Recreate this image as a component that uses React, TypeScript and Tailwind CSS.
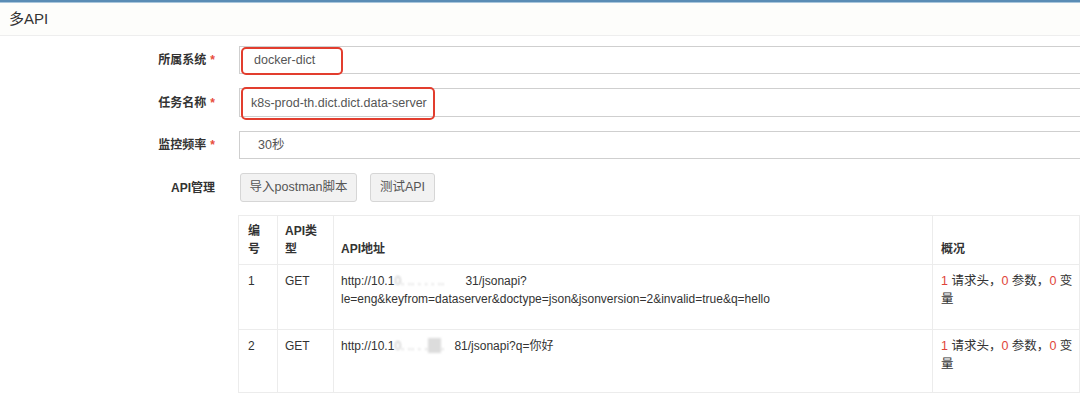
// 多API 表单页
const font = "font-['Liberation_Sans','Noto_Sans_CJK_SC',sans-serif]";

function Label({ text, required }: { text: string; required?: boolean }) {
  return (
    <div className="w-[215px] shrink-0 text-right text-[12px] font-bold text-[#333]">
      {text}
      {required && <span className="ml-[4px] text-[#e74c3c]">*</span>}
    </div>
  );
}

function Blur({ w, block }: { w: number; block?: boolean }) {
  return (
    <span
      className="relative inline-block overflow-hidden whitespace-nowrap align-top text-[#bdbdbd] blur-[1px]"
      style={{ width: w }}
    >
      0.&nbsp;..&nbsp;.&nbsp;.&nbsp;.&nbsp;..
      {block && <span className="absolute left-[34px] top-[1px] h-[15px] w-[13px] bg-[#dcdcdc]" />}
    </span>
  );
}

function Summary() {
  return (
    <>
      <span className="text-[#e0443a]">1</span> 请求头，<span className="text-[#e0443a]">0</span> 参数，
      <span className="text-[#e0443a]">0</span> 变<br />量
    </>
  );
}

export default function App() {
  return (
    <div className={`${font} w-[1080px] h-[402px] overflow-hidden bg-white text-[#333]`}>
      <div className="h-[2px] bg-[#5a8cb5]" />
      <div className="h-[1px] bg-[#a9c6dc]" />
      <div className="flex h-[33px] items-center border-b border-[#eeeeee] bg-[#fdfdfb] pl-[9px] text-[15px] text-[#333]">
        多API
      </div>

      <div className="pt-[10px]">
        <div className="flex items-center">
          <Label text="所属系统" required />
          <div className="relative ml-[24px] h-[28px] w-[870px] shrink-0 border border-[#cfcfcf] pl-[14px] text-[12.5px] leading-[27px] text-[#555]">
            docker-dict
            <div className="absolute left-[1px] top-[0px] h-[28px] w-[102px] rounded-[5px] border-[2.5px] border-[#e23d2e]" />
          </div>
        </div>

        <div className="mt-[14px] flex items-center">
          <Label text="任务名称" required />
          <div className="relative ml-[24px] h-[29px] w-[870px] shrink-0 border border-[#cfcfcf] pl-[11px] text-[12.5px] leading-[28px] text-[#555]">
            k8s-prod-th.dict.dict.data-server
            <div className="absolute left-[1px] top-[-2px] h-[33px] w-[194px] rounded-[5px] border-[2.5px] border-[#e23d2e]" />
          </div>
        </div>

        <div className="mt-[14px] flex items-center">
          <Label text="监控频率" required />
          <div className="ml-[24px] h-[28px] w-[870px] shrink-0 border border-[#cfcfcf] pl-[18px] text-[12.5px] leading-[27px] text-[#555]">
            30秒
          </div>
        </div>

        <div className="mt-[14px] flex items-center">
          <Label text="API管理" />
          <div className="ml-[25px] flex gap-[13px]">
            <button className="h-[29px] w-[117px] rounded-[3px] border border-[#d6d6d6] bg-[#f2f2f2] text-[12.5px] text-[#555]">
              导入postman脚本
            </button>
            <button className="h-[29px] w-[65px] rounded-[3px] border border-[#d6d6d6] bg-[#f2f2f2] text-[12.5px] text-[#555]">
              测试API
            </button>
          </div>
        </div>

        <table className="ml-[238px] mt-[13px] w-[842px] border-collapse border border-[#ececec] text-[12px] leading-[18px] text-[#333]">
          <thead>
            <tr className="h-[49px] border-b border-[#ececec] text-left font-bold">
              <th className="w-[39px] border-r border-[#ececec] pl-[9px] pt-[6px] pb-[6px] align-bottom">
                编<br />号
              </th>
              <th className="w-[56px] border-r border-[#ececec] pl-[7px] pt-[6px] pb-[6px] align-bottom">
                API类<br />型
              </th>
              <th className="w-[599px] border-r border-[#ececec] pl-[7px] pb-[6px] align-bottom">API地址</th>
              <th className="pl-[8px] pb-[6px] align-bottom">概况</th>
            </tr>
          </thead>
          <tbody>
            <tr className="h-[65px] border-b border-[#ececec]">
              <td className="border-r border-[#ececec] pl-[9px] pt-[7px] align-top">1</td>
              <td className="border-r border-[#ececec] pl-[7px] pt-[7px] align-top">GET</td>
              <td className="border-r border-[#ececec] pl-[7px] pt-[7px] align-top">
                http://10.1<Blur w={71} />31/jsonapi?
                <br />
                le=eng&amp;keyfrom=dataserver&amp;doctype=json&amp;jsonversion=2&amp;invalid=true&amp;q=hello
              </td>
              <td className="pl-[8px] pt-[7px] align-top text-[12.5px]">
                <Summary />
              </td>
            </tr>
            <tr className="h-[63px]">
              <td className="border-r border-[#ececec] pl-[9px] pt-[7px] align-top">2</td>
              <td className="border-r border-[#ececec] pl-[7px] pt-[7px] align-top">GET</td>
              <td className="border-r border-[#ececec] pl-[7px] pt-[7px] align-top">
                http://10.1<Blur w={60} block />81/jsonapi?q=你好
              </td>
              <td className="pl-[8px] pt-[7px] align-top text-[12.5px]">
                <Summary />
              </td>
            </tr>
          </tbody>
        </table>
      </div>
    </div>
  );
}
